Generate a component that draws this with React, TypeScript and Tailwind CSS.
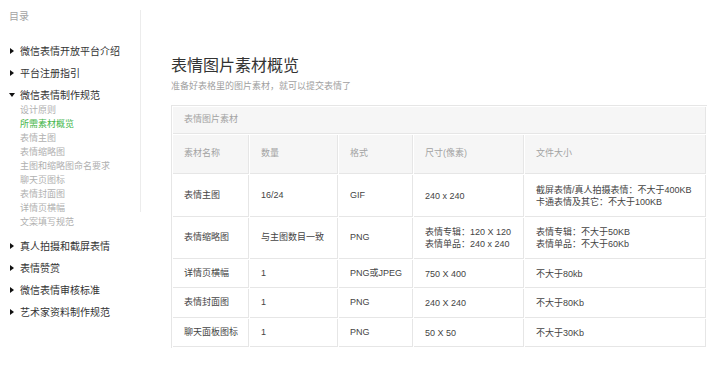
import React from 'react';

const font = { fontFamily: '"Liberation Sans", "Noto Sans CJK SC", sans-serif' };

interface NavItem {
  label: string;
  open?: boolean;
  children?: { label: string; active?: boolean }[];
}

const nav: NavItem[] = [
  { label: '微信表情开放平台介绍' },
  { label: '平台注册指引' },
  {
    label: '微信表情制作规范',
    open: true,
    children: [
      { label: '设计原则' },
      { label: '所需素材概览', active: true },
      { label: '表情主图' },
      { label: '表情缩略图' },
      { label: '主图和缩略图命名要求' },
      { label: '聊天页图标' },
      { label: '表情封面图' },
      { label: '详情页横幅' },
      { label: '文案填写规范' },
    ],
  },
  { label: '真人拍摄和截屏表情' },
  { label: '表情赞赏' },
  { label: '微信表情审核标准' },
  { label: '艺术家资料制作规范' },
];

const rows = [
  { name: '表情主图', count: '16/24', fmt: 'GIF', size: ['240 x 240'], file: ['截屏表情/真人拍摄表情：不大于400KB', '卡通表情及其它：不大于100KB'], h: 'h-[42px]' },
  { name: '表情缩略图', count: '与主图数目一致', fmt: 'PNG', size: ['表情专辑：120 X 120', '表情单品：240 x 240'], file: ['表情专辑：不大于50KB', '表情单品：不大于60Kb'], h: 'h-[41px]' },
  { name: '详情页横幅', count: '1', fmt: 'PNG或JPEG', size: ['750 X 400'], file: ['不大于80kb'], h: 'h-[28px]' },
  { name: '表情封面图', count: '1', fmt: 'PNG', size: ['240 X 240'], file: ['不大于80Kb'], h: 'h-[29px]' },
  { name: '聊天面板图标', count: '1', fmt: 'PNG', size: ['50 X 50'], file: ['不大于30Kb'], h: 'h-[28px]' },
];

function Caret({ open }: { open?: boolean }) {
  return (
    <svg width="6" height="6" viewBox="0 0 6 6" className="mr-[5px] shrink-0">
      {open ? <path d="M0 1 L6 1 L3 5 Z" fill="#111" /> : <path d="M1 0 L5 3 L1 6 Z" fill="#111" />}
    </svg>
  );
}

function Sidebar() {
  return (
    <div className="w-[141px] shrink-0 pt-[10px]">
      <div className="border-r border-[#ececec] h-[202px] pl-[9px]">
        <div className="text-[10px] leading-[14px] text-[#a3a3a3]">目录</div>
      </div>
    </div>
  );
}

function NavList() {
  return (
    <div className="absolute left-0 top-[40px] pl-[9px]">
      {nav.map((item) => (
        <div key={item.label}>
          <div className="flex items-center h-[22px] text-[10px] text-[#333]">
            <Caret open={item.open} />
            <span>{item.label}</span>
          </div>
          {item.children && (
            <div className="-mt-[3px] mb-[6px] pl-[11px]">
              {item.children.map((c) => (
                <div
                  key={c.label}
                  className={`text-[9px] leading-[14px] ${c.active ? 'text-[#44b549]' : 'text-[#b0b0b0]'}`}
                >
                  {c.label}
                </div>
              ))}
            </div>
          )}
        </div>
      ))}
    </div>
  );
}

export default function App() {
  const cell = 'border-r border-b border-[#e6e6e6] px-[11px] align-middle whitespace-nowrap';
  return (
    <div className="relative w-[720px] h-[366px] bg-white flex" style={font}>
      <Sidebar />
      <NavList />
      <div className="pl-[30px] pt-[55px]">
        <h1 className="text-[16px] leading-[22px] text-[#333]">表情图片素材概览</h1>
        <p className="text-[9px] leading-[14px] text-[#a0a0a0] mt-[2px]">准备好表格里的图片素材，就可以提交表情了</p>
        <table className="mt-[12px] w-[535px] table-fixed border-separate border-spacing-[1px] border-l border-t border-[#e6e6e6] text-[9px] text-[#444]">
          <colgroup>
            <col className="w-[76px]" />
            <col className="w-[88px]" />
            <col className="w-[74px]" />
            <col className="w-[110px]" />
            <col className="w-[181px]" />
          </colgroup>
          <thead>
            <tr>
              <th colSpan={5} className={`${cell} h-[27px] bg-[#f6f6f6] text-left font-normal text-[#a3a3a3]`}>
                表情图片素材
              </th>
            </tr>
            <tr>
              {['素材名称', '数量', '格式', '尺寸(像素)', '文件大小'].map((t) => (
                <th key={t} className={`${cell} h-[39px] bg-[#f6f6f6] text-left font-normal text-[#a3a3a3]`}>
                  {t}
                </th>
              ))}
            </tr>
          </thead>
          <tbody>
            {rows.map((r) => (
              <tr key={r.name}>
                <td className={`${cell} ${r.h}`}>{r.name}</td>
                <td className={cell}>{r.count}</td>
                <td className={cell}>{r.fmt}</td>
                <td className={`${cell} leading-[12px]`}>
                  {r.size.map((s) => (
                    <div key={s}>{s}</div>
                  ))}
                </td>
                <td className={`${cell} leading-[12px]`}>
                  {r.file.map((s) => (
                    <div key={s}>{s}</div>
                  ))}
                </td>
              </tr>
            ))}
          </tbody>
        </table>
      </div>
    </div>
  );
}
